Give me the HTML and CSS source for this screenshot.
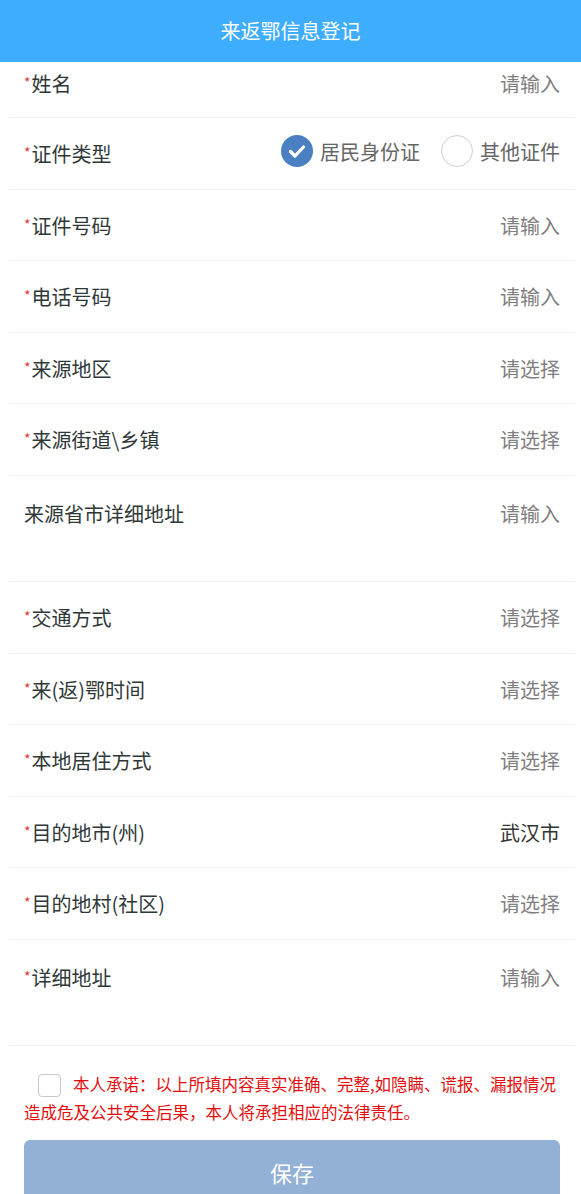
FILE: index.html
```html
<!DOCTYPE html>
<html lang="zh-CN">
<head>
    <meta charset="UTF-8">
    <meta name="viewport" content="width=device-width, initial-scale=1.0">
    <title>来返鄂信息登记</title>
    <link rel="stylesheet" href="styles.css">
</head>
<body>
    <header class="header">
        <h1>来返鄂信息登记</h1>
    </header>
    <main class="form-list">
        <div class="row row-first">
            <span class="label"><i class="req">*</i>姓名</span>
            <span class="value">请输入</span>
        </div>
        <div class="row">
            <span class="label"><i class="req">*</i>证件类型</span>
            <div class="radio-group">
                <label class="radio checked">
                    <span class="dot">
                        <svg width="32" height="32" viewBox="0 0 32 32"><path d="M9.5 16.5l4.5 4.5 8.5-9" fill="none" stroke="#fff" stroke-width="3.2" stroke-linecap="round" stroke-linejoin="round"/></svg>
                    </span>
                    居民身份证
                </label>
                <label class="radio">
                    <span class="dot"></span>
                    其他证件
                </label>
            </div>
        </div>
        <div class="row">
            <span class="label"><i class="req">*</i>证件号码</span>
            <span class="value">请输入</span>
        </div>
        <div class="row">
            <span class="label"><i class="req">*</i>电话号码</span>
            <span class="value">请输入</span>
        </div>
        <div class="row">
            <span class="label"><i class="req">*</i>来源地区</span>
            <span class="value">请选择</span>
        </div>
        <div class="row">
            <span class="label"><i class="req">*</i>来源街道\乡镇</span>
            <span class="value">请选择</span>
        </div>
        <div class="row row-tall">
            <span class="label">来源省市详细地址</span>
            <span class="value">请输入</span>
        </div>
        <div class="row">
            <span class="label"><i class="req">*</i>交通方式</span>
            <span class="value">请选择</span>
        </div>
        <div class="row">
            <span class="label"><i class="req">*</i>来(返)鄂时间</span>
            <span class="value">请选择</span>
        </div>
        <div class="row">
            <span class="label"><i class="req">*</i>本地居住方式</span>
            <span class="value">请选择</span>
        </div>
        <div class="row">
            <span class="label"><i class="req">*</i>目的地市(州)</span>
            <span class="value filled">武汉市</span>
        </div>
        <div class="row">
            <span class="label"><i class="req">*</i>目的地村(社区)</span>
            <span class="value">请选择</span>
        </div>
        <div class="row row-tall">
            <span class="label"><i class="req">*</i>详细地址</span>
            <span class="value">请输入</span>
        </div>
    </main>
    <section class="promise">
        <p><span class="box"></span>本人承诺：以上所填内容真实准确、完整,如隐瞒、谎报、漏报情况造成危及公共安全后果，本人将承担相应的法律责任。</p>
        <button class="save">保存</button>
    </section>
</body>
</html>
```

FILE: styles.css
```css
body {
    margin: 0;
    font-family: "Noto Sans CJK SC", "Noto Sans", sans-serif;
    background: #fff;
    color: #2f3838;
}
.header {
    height: 62px;
    background-color: #3fadfd;
    display: flex;
    align-items: center;
    justify-content: center;
}
.header h1 {
    margin: 0;
    font-size: 20px;
    font-weight: normal;
    color: #fff;
    line-height: 24px;
}
.form-list {
    margin: 0 6px 0 9px;
}
.row {
    box-sizing: border-box;
    height: 71.6px;
    padding: 24px 15px 0 15px;
    display: flex;
    justify-content: space-between;
    align-items: flex-start;
    border-bottom: 1px solid #eeeeee;
    font-size: 20px;
    line-height: 24px;
}
.row-first {
    height: 56px;
    padding-top: 10px;
}
.row-tall {
    height: 106px;
    padding-top: 26px;
}
.label {
    color: #2f3838;
}
.req {
    font-style: normal;
    color: #e0393b;
    font-size: 14px;
    line-height: 0;
    vertical-align: 4px;
    margin-right: 1px;
}
.value {
    color: #808080;
}
.value.filled {
    color: #333;
}
.radio-group {
    display: flex;
    align-items: center;
    gap: 21px;
    margin-top: -5px;
}
.radio {
    display: flex;
    align-items: center;
    gap: 7px;
    color: #666;
}
.radio .dot {
    box-sizing: border-box;
    width: 32px;
    height: 32px;
    border-radius: 50%;
    border: 1px solid #cfcfcf;
    display: block;
    margin-top: -2px;
}
.radio.checked .dot {
    border: none;
    background: #4a80c2;
}
.radio .dot svg {
    display: block;
}
.promise {
    padding: 24px 21px 0 24px;
}
.promise p {
    margin: 0;
    font-size: 16.5px;
    line-height: 28px;
    color: #e30d0d;
}
.promise .box {
    display: inline-block;
    box-sizing: border-box;
    width: 23px;
    height: 23px;
    border: 1px solid #c8c8c8;
    border-radius: 4px;
    vertical-align: -6px;
    margin: 0 12px 0 14px;
}
.save {
    display: block;
    width: 100%;
    height: 64px;
    margin-top: 14px;
    border: none;
    border-radius: 6px;
    background-color: #93b0d6;
    color: #fff;
    font-family: inherit;
    font-size: 22px;
    line-height: 60px;
    padding: 0;
}
```
